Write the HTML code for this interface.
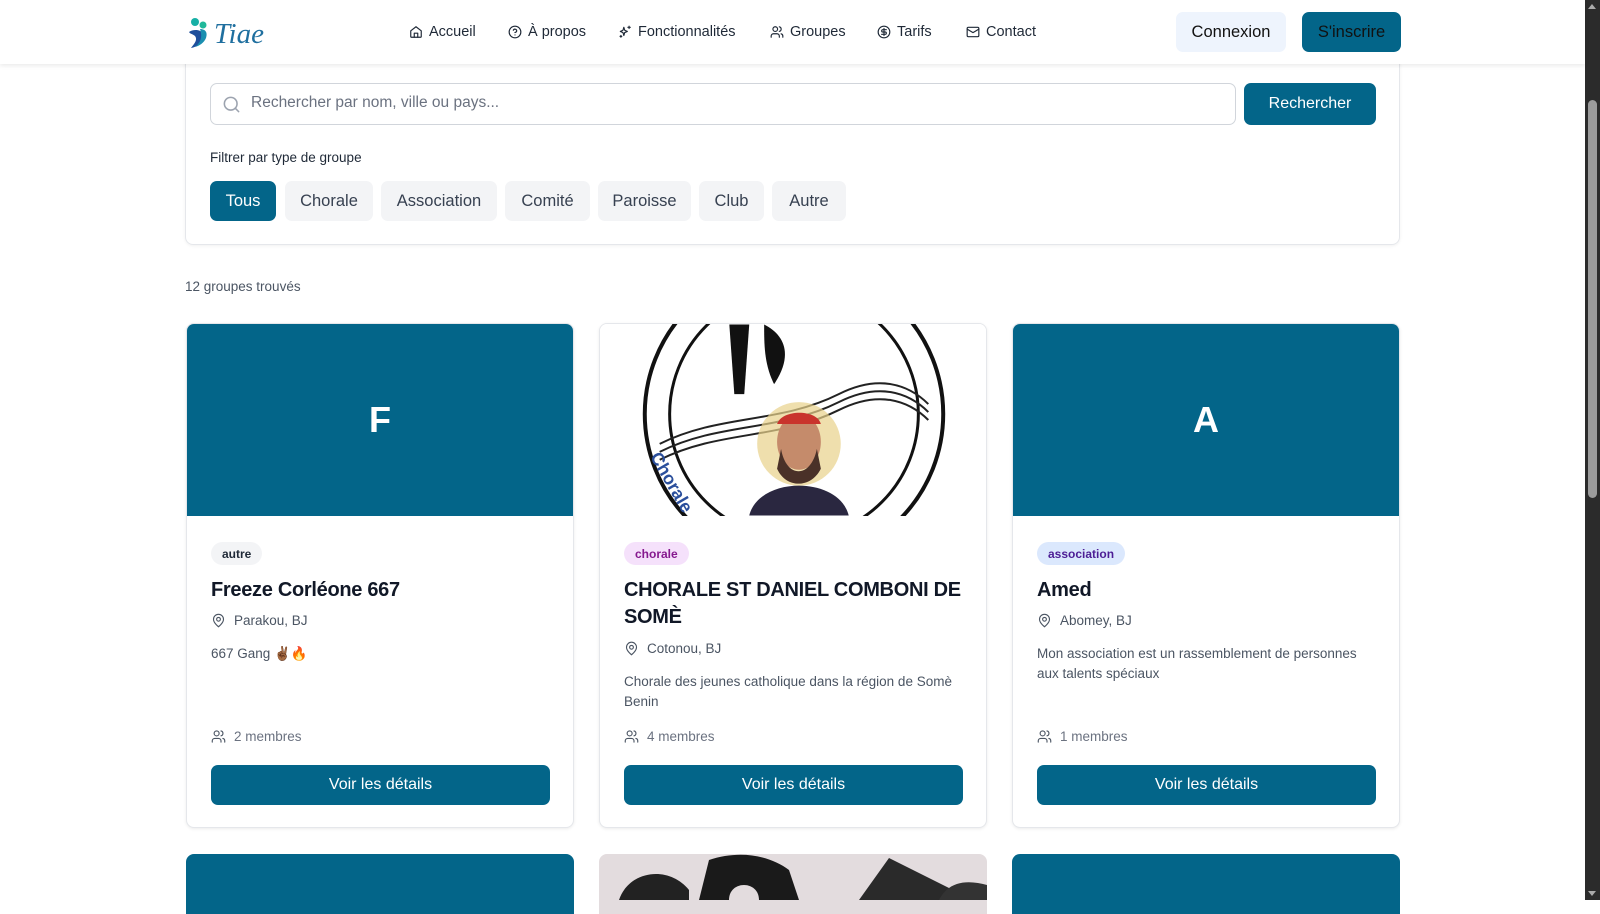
<!DOCTYPE html><html><head><meta charset="utf-8"><style>
*{box-sizing:border-box;margin:0;padding:0}
body{width:1600px;height:900px;overflow:hidden;background:#fff;font-family:"Liberation Sans",sans-serif;color:#111827;position:relative}
.a{position:absolute}
.hdr{left:0;top:0;width:1585px;height:64px;background:#fff;box-shadow:0 2px 4px rgba(0,0,0,.08);z-index:5}
.nav{top:24px;font-size:14.5px;color:#1f2937;display:flex;align-items:center;gap:6px}
.nav svg{width:14px;height:14px;fill:none;stroke:#1f2937;stroke-width:2;stroke-linecap:round;stroke-linejoin:round}
.btn{display:flex;align-items:center;justify-content:center;border-radius:7px;font-size:16.5px}
.fc{left:185px;top:40px;width:1215px;height:205px;border:1px solid #e5e7eb;border-radius:8px;box-shadow:0 1px 3px rgba(0,0,0,.06)}
.chip{top:181px;height:40px;border-radius:7px;background:#f3f4f6;color:#374151;font-size:16.5px;display:flex;align-items:center;justify-content:center}
.card{top:323px;width:388px;height:505px;border:1px solid #e5e7eb;border-radius:8px;overflow:hidden;box-shadow:0 1px 3px rgba(0,0,0,.08);background:#fff}
.img{position:absolute;left:0;top:0;width:100%;height:192px;background:#036589;color:#fff;font-size:36px;font-weight:bold;display:flex;align-items:center;justify-content:center}
.badge{position:absolute;left:24px;top:218px;height:23px;padding:0 11px;border-radius:12px;font-size:12px;display:flex;align-items:center;font-weight:bold}
.ttl{position:absolute;left:24px;top:253px;width:350px;font-size:20px;font-weight:bold;line-height:27px;color:#111827;letter-spacing:-0.3px}
.loc{position:absolute;left:24px;font-size:13.5px;color:#4b5563;display:flex;align-items:center;gap:8px}
.loc svg,.mem svg{width:15px;height:15px;fill:none;stroke:#4b5563;stroke-width:1.8;stroke-linecap:round;stroke-linejoin:round}
.desc{position:absolute;left:24px;width:340px;font-size:13.5px;line-height:20px;color:#4b5563}
.mem{position:absolute;left:24px;top:405px;font-size:13.5px;color:#6b7280;display:flex;align-items:center;gap:8px}
.vb{position:absolute;left:24px;top:441px;width:339px;height:40px;background:#036589;color:#fff;border-radius:7px;font-size:16px;display:flex;align-items:center;justify-content:center}
</style></head><body>
<div class="a hdr">
 <svg class="a" style="left:186px;top:16px" width="90" height="34" viewBox="0 0 90 34">
  <circle cx="9" cy="6" r="4" fill="#17b0a6"/><circle cx="17" cy="9" r="3.5" fill="#1fb89a"/>
  <path d="M3 16c4-3 12-3 14 2c2 6-5 13-12 14c3-4 7-8 4-12c-2-2-5-2-6-4z" fill="#1e4f9c"/>
  <path d="M14 13c5 0 8 3 6 9c-2 5-7 8-11 9c5-4 8-9 5-18z" fill="#1a8fb0"/>
  <text x="28" y="27" font-family="Liberation Serif,serif" font-style="italic" font-size="29" fill="#1f6f9f">Tiae</text>
 </svg>
 <div class="a nav" style="left:409px"><svg viewBox="0 0 24 24"><path d="M3 10l9-7 9 7v10a1 1 0 0 1-1 1H4a1 1 0 0 1-1-1z"/><path d="M9 21v-7h6v7"/></svg>Accueil</div>
 <div class="a nav" style="left:508px"><svg viewBox="0 0 24 24"><circle cx="12" cy="12" r="10"/><path d="M9.1 9a3 3 0 0 1 5.8 1c0 2-3 3-3 3"/><path d="M12 17h.01"/></svg>À propos</div>
 <div class="a nav" style="left:618px"><svg viewBox="0 0 24 24"><path d="M10 4l1.5 5L16 11l-4.5 2L10 18l-1.5-5L4 11l4.5-2z"/><path d="M19 2v4M17 4h4M5 18v3M3.5 19.5h3"/></svg>Fonctionnalités</div>
 <div class="a nav" style="left:770px"><svg viewBox="0 0 24 24"><path d="M16 21v-2a4 4 0 0 0-4-4H6a4 4 0 0 0-4 4v2"/><circle cx="9" cy="7" r="4"/><path d="M22 21v-2a4 4 0 0 0-3-3.9M16 3.1a4 4 0 0 1 0 7.8"/></svg>Groupes</div>
 <div class="a nav" style="left:877px"><svg viewBox="0 0 24 24"><circle cx="12" cy="12" r="10"/><path d="M16 8h-6a2 2 0 1 0 0 4h4a2 2 0 1 1 0 4H8M12 18V6"/></svg>Tarifs</div>
 <div class="a nav" style="left:966px"><svg viewBox="0 0 24 24"><rect x="2" y="4" width="20" height="16" rx="2"/><path d="M22 7l-10 6L2 7"/></svg>Contact</div>
 <div class="a btn" style="left:1176px;top:12px;width:110px;height:40px;background:#eef4fd;color:#111">Connexion</div>
 <div class="a btn" style="left:1302px;top:12px;width:99px;height:40px;background:#036589;color:#111">S'inscrire</div>
</div>
<div class="a" style="left:1585px;top:0;width:15px;height:900px;background:#2b2b2b"><div style="position:absolute;left:3px;top:100px;width:9px;height:398px;background:#9b9b9b;border-radius:5px"></div><div style="position:absolute;left:3px;top:4px;border:4.5px solid transparent;border-bottom:5px solid #aaa;border-top:0"></div><div style="position:absolute;left:3px;bottom:4px;border:4.5px solid transparent;border-top:5px solid #aaa;border-bottom:0"></div></div>
<div class="a fc"></div>
<div class="a" style="left:210px;top:83px;width:1026px;height:42px;border:1px solid #d1d5db;border-radius:7px"></div>
<svg class="a" style="left:222px;top:95px" width="19" height="19" viewBox="0 0 24 24" fill="none" stroke="#9ca3af" stroke-width="2" stroke-linecap="round"><circle cx="11" cy="11" r="8"/><path d="M21 21l-4.3-4.3"/></svg>
<div class="a" style="left:251px;top:94px;font-size:15.5px;color:#6b7280">Rechercher par nom, ville ou pays...</div>
<div class="a btn" style="left:1244px;top:83px;width:132px;height:42px;background:#036589;color:#fff;font-size:16px">Rechercher</div>
<div class="a" style="left:210px;top:150px;font-size:13.5px;color:#1f2937">Filtrer par type de groupe</div>
<div class="a chip" style="left:210px;width:66px;background:#036589;color:#fff">Tous</div>
<div class="a chip" style="left:285px;width:88px">Chorale</div>
<div class="a chip" style="left:381px;width:116px">Association</div>
<div class="a chip" style="left:505px;width:85px">Comité</div>
<div class="a chip" style="left:598px;width:93px">Paroisse</div>
<div class="a chip" style="left:699px;width:65px">Club</div>
<div class="a chip" style="left:772px;width:74px">Autre</div>
<div class="a" style="left:185px;top:279px;font-size:13.5px;color:#4b5563">12 groupes trouvés</div>

<div class="a card" style="left:186px">
 <div class="img">F</div>
 <div class="badge" style="background:#f3f4f6;color:#1f2937">autre</div>
 <div class="ttl">Freeze Corléone 667</div>
 <div class="loc" style="top:289px"><svg viewBox="0 0 24 24"><path d="M20 10c0 6-8 12-8 12s-8-6-8-12a8 8 0 0 1 16 0z"/><circle cx="12" cy="10" r="3"/></svg>Parakou, BJ</div>
 <div class="desc" style="top:320px">667 Gang ✌🏾🔥</div>
 <div class="mem"><svg viewBox="0 0 24 24"><path d="M16 21v-2a4 4 0 0 0-4-4H6a4 4 0 0 0-4 4v2"/><circle cx="9" cy="7" r="4"/><path d="M22 21v-2a4 4 0 0 0-3-3.9M16 3.1a4 4 0 0 1 0 7.8"/></svg>2 membres</div>
 <div class="vb">Voir les détails</div>
</div>

<div class="a card" style="left:599px">
 <div class="img" style="background:#fff">
  <svg width="388" height="192" viewBox="0 0 388 192">
   <circle cx="195" cy="90" r="150" fill="none" stroke="#111" stroke-width="4"/>
   <circle cx="195" cy="90" r="125" fill="none" stroke="#111" stroke-width="3"/>
   <path d="M60 120c60-30 120-20 180-50c40-20 70-10 90 10" fill="none" stroke="#222" stroke-width="2"/>
   <path d="M60 128c60-30 120-20 180-50c40-20 70-10 90 10" fill="none" stroke="#222" stroke-width="2"/>
   <path d="M60 136c60-30 120-20 180-50c40-20 70-10 90 10" fill="none" stroke="#222" stroke-width="2"/>
   <path d="M130 0h20l-5 70h-10z" fill="#111"/><path d="M165 0c20 10 30 30 10 60c-10-20-10-40-10-60z" fill="#111"/>
   <circle cx="200" cy="120" r="42" fill="#e8d28a" opacity=".7"/>
   <ellipse cx="200" cy="118" rx="22" ry="28" fill="#c58b6b"/>
   <path d="M178 100c5-15 40-15 44 0z" fill="#c9342c"/>
   <path d="M182 125c5 30 30 30 36 0l4 20c-10 20-35 20-44 0z" fill="#4a3128"/>
   <path d="M150 192c10-40 90-40 100 0z" fill="#2a2740"/>
   <text x="40" y="150" font-size="18" font-weight="bold" fill="#2b4f9c" transform="rotate(60 60 150)">Chorale</text>
  </svg>
 </div>
 <div class="badge" style="background:#f5e1fb;color:#86198f">chorale</div>
 <div class="ttl">CHORALE ST DANIEL COMBONI DE SOMÈ</div>
 <div class="loc" style="top:317px"><svg viewBox="0 0 24 24"><path d="M20 10c0 6-8 12-8 12s-8-6-8-12a8 8 0 0 1 16 0z"/><circle cx="12" cy="10" r="3"/></svg>Cotonou, BJ</div>
 <div class="desc" style="top:348px">Chorale des jeunes catholique dans la région de Somè Benin</div>
 <div class="mem"><svg viewBox="0 0 24 24"><path d="M16 21v-2a4 4 0 0 0-4-4H6a4 4 0 0 0-4 4v2"/><circle cx="9" cy="7" r="4"/><path d="M22 21v-2a4 4 0 0 0-3-3.9M16 3.1a4 4 0 0 1 0 7.8"/></svg>4 membres</div>
 <div class="vb">Voir les détails</div>
</div>

<div class="a card" style="left:1012px">
 <div class="img">A</div>
 <div class="badge" style="background:#dbe8fd;color:#4c1d95">association</div>
 <div class="ttl">Amed</div>
 <div class="loc" style="top:289px"><svg viewBox="0 0 24 24"><path d="M20 10c0 6-8 12-8 12s-8-6-8-12a8 8 0 0 1 16 0z"/><circle cx="12" cy="10" r="3"/></svg>Abomey, BJ</div>
 <div class="desc" style="top:320px">Mon association est un rassemblement de personnes aux talents spéciaux</div>
 <div class="mem"><svg viewBox="0 0 24 24"><path d="M16 21v-2a4 4 0 0 0-4-4H6a4 4 0 0 0-4 4v2"/><circle cx="9" cy="7" r="4"/><path d="M22 21v-2a4 4 0 0 0-3-3.9M16 3.1a4 4 0 0 1 0 7.8"/></svg>1 membres</div>
 <div class="vb">Voir les détails</div>
</div>

<div class="a" style="left:186px;top:854px;width:388px;height:60px;background:#036589;border-radius:8px 8px 0 0"></div>
<div class="a" style="left:599px;top:854px;width:388px;height:60px;background:#e3dcde;border-radius:8px 8px 0 0;overflow:hidden">
 <svg width="388" height="46"><path d="M20 46c10-30 50-35 70-10v10z" fill="#222"/><path d="M100 46l10-40c30-10 60-5 80 10l10 30h-40c0-20-30-20-30 0z" fill="#1a1a1a"/><path d="M260 46l30-42 60 30 5 12z" fill="#2a2a2a"/><path d="M340 46c10-20 30-20 48-15v15z" fill="#333"/></svg>
</div>
<div class="a" style="left:1012px;top:854px;width:388px;height:60px;background:#036589;border-radius:8px 8px 0 0"></div>
</body></html>
